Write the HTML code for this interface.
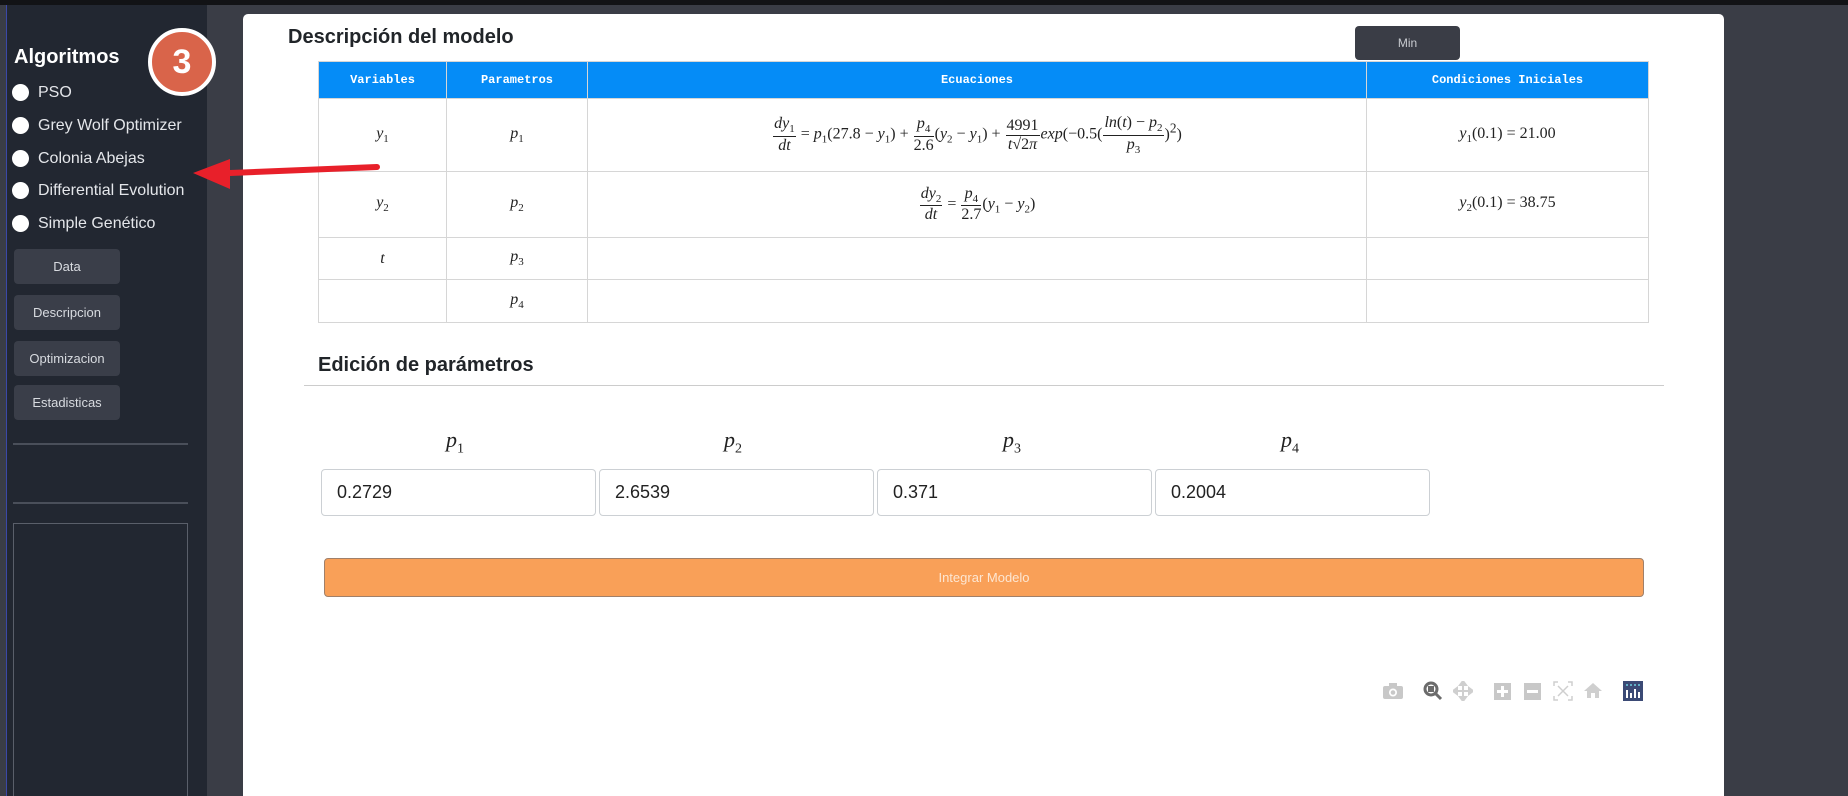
<!DOCTYPE html>
<html><head><meta charset="utf-8"><style>
*{box-sizing:border-box;margin:0;padding:0}
html,body{width:1848px;height:796px;overflow:hidden}
body{background:#3a3d46;font-family:"Liberation Sans",sans-serif;position:relative}
.abs{position:absolute}
.top{left:0;top:0;width:1848px;height:5px;background:#121316}
.side{left:6px;top:5px;width:201px;height:791px;background:#222731;border-left:1px solid #3b48a8;overflow:hidden}
.rad{position:absolute;left:5px;width:17px;height:17px;border-radius:50%;background:#fff}
.rl{position:absolute;left:31px;color:#e4e6ea;font-size:16px;line-height:18px}
.btn{position:absolute;left:7px;width:106px;height:35px;background:#3a3e49;border-radius:4px;color:#d8dbe0;font-size:13px;text-align:center;line-height:35px}
.card{left:243px;top:14px;width:1481px;height:782px;background:#fff;border-radius:5px 5px 0 0;overflow:hidden}
h2{position:absolute;font-size:20px;font-weight:bold;color:#212529}
table{position:absolute;left:75px;top:47px;border-collapse:collapse;width:1331px}
th{background:#058cf7;color:#fff;font-family:"Liberation Mono",monospace;font-size:12px;font-weight:bold;height:37px;border:1px solid #d6d6d6}
td{border:1px solid #d6d6d6;text-align:center;font-family:"Liberation Serif",serif;font-style:italic;font-size:16px;color:#222}
sub{font-size:11px;font-style:normal}
.fr{display:inline-flex;flex-direction:column;vertical-align:middle;text-align:center;margin:0 1px}
.fr>span:first-child{border-bottom:1px solid #222;padding:0 1px}
.n{font-style:normal}
.plab{position:absolute;top:413px;font-family:"Liberation Serif",serif;font-style:italic;font-size:22px;color:#222}
.inp{position:absolute;top:455px;height:47px;width:275px;border:1px solid #ccd0d4;border-radius:4px;font-size:18px;color:#222;padding-left:15px;line-height:45px}
.ic{position:absolute;top:669px}
</style></head><body>
<div class="abs top"></div>
<div class="abs side">
 <div class="abs" style="left:7px;top:41px;color:#fff;font-weight:bold;font-size:20px">Algoritmos</div>
 <div class="rad" style="top:79px"></div><div class="rl" style="top:79px">PSO</div>
 <div class="rad" style="top:112px"></div><div class="rl" style="top:112px">Grey Wolf Optimizer</div>
 <div class="rad" style="top:145px"></div><div class="rl" style="top:145px">Colonia Abejas</div>
 <div class="rad" style="top:177px"></div><div class="rl" style="top:177px">Differential Evolution</div>
 <div class="rad" style="top:210px"></div><div class="rl" style="top:210px">Simple Genético</div>
 <div class="btn" style="top:244px">Data</div>
 <div class="btn" style="top:290px">Descripcion</div>
 <div class="btn" style="top:336px">Optimizacion</div>
 <div class="btn" style="top:380px">Estadisticas</div>
 <div class="abs" style="left:6px;top:438px;width:175px;height:2px;background:#4a4f5a"></div>
 <div class="abs" style="left:6px;top:497px;width:175px;height:2px;background:#4a4f5a"></div>
 <div class="abs" style="left:6px;top:518px;width:175px;height:290px;border:1px solid #5a5f6a"></div>
</div>
<div class="abs card">
 <h2 style="left:45px;top:12px">Descripción del modelo</h2>
 <div class="abs" style="left:1112px;top:12px;width:105px;height:34px;background:#3a3d46;border-radius:4px;color:#c8cbd0;font-size:12px;text-align:center;line-height:34px">Min</div>
 <table>
  <tr><th style="width:128px">Variables</th><th style="width:141px">Parametros</th><th style="width:779px">Ecuaciones</th><th>Condiciones Iniciales</th></tr>
  <tr style="height:73px"><td>y<sub>1</sub></td><td>p<sub>1</sub></td><td><span class="fr"><span>dy<sub>1</sub></span><span>dt</span></span> <span class="n">=</span> p<sub>1</sub><span class="n">(27.8 − </span>y<sub>1</sub><span class="n">) + </span><span class="fr"><span>p<sub>4</sub></span><span class="n">2.6</span></span><span class="n">(</span>y<sub>2</sub><span class="n"> − </span>y<sub>1</sub><span class="n">) + </span><span class="fr"><span class="n">4991</span><span>t<span class="n">√2</span>π</span></span>exp<span class="n">(−0.5(</span><span class="fr"><span>ln<span class="n">(</span>t<span class="n">) − </span>p<sub>2</sub></span><span>p<sub>3</sub></span></span><span class="n">)<sup>2</sup>)</span></td><td>y<sub>1</sub><span class="n">(0.1) = 21.00</span></td></tr>
  <tr style="height:66px"><td>y<sub>2</sub></td><td>p<sub>2</sub></td><td><span class="fr"><span>dy<sub>2</sub></span><span>dt</span></span> <span class="n">=</span> <span class="fr"><span>p<sub>4</sub></span><span class="n">2.7</span></span><span class="n">(</span>y<sub>1</sub><span class="n"> − </span>y<sub>2</sub><span class="n">)</span></td><td>y<sub>2</sub><span class="n">(0.1) = 38.75</span></td></tr>
  <tr style="height:42px"><td>t</td><td>p<sub>3</sub></td><td></td><td></td></tr>
  <tr style="height:43px"><td></td><td>p<sub>4</sub></td><td></td><td></td></tr>
 </table>
 <h2 style="left:75px;top:340px">Edición de parámetros</h2>
 <div class="abs" style="left:61px;top:371px;width:1360px;height:1px;background:#ccc"></div>
 <div class="plab" style="left:203px">p<sub style="font-size:14px">1</sub></div>
 <div class="plab" style="left:481px">p<sub style="font-size:14px">2</sub></div>
 <div class="plab" style="left:760px">p<sub style="font-size:14px">3</sub></div>
 <div class="plab" style="left:1038px">p<sub style="font-size:14px">4</sub></div>
 <div class="inp" style="left:78px">0.2729</div>
 <div class="inp" style="left:356px">2.6539</div>
 <div class="inp" style="left:634px">0.371</div>
 <div class="inp" style="left:912px">0.2004</div>
 <div class="abs" style="left:81px;top:544px;width:1320px;height:39px;background:#f9a058;border:1px solid #a0806a;border-radius:4px;color:#fde6d2;font-size:13px;text-align:center;line-height:37px">Integrar Modelo</div>
 <svg class="ic" style="left:1140px" width="20" height="16"><rect x="0" y="3" width="20" height="13" rx="2" fill="#c8c8c8"/><rect x="6" y="0" width="8" height="4" fill="#c8c8c8"/><circle cx="10" cy="9.5" r="4" fill="#fff"/><circle cx="10" cy="9.5" r="2.3" fill="#c8c8c8"/></svg>
 <svg class="ic" style="left:1180px;top:667px" width="20" height="20"><circle cx="8" cy="8" r="6" fill="none" stroke="#6b6b6b" stroke-width="3"/><rect x="5" y="5" width="6" height="6" fill="#6b6b6b"/><line x1="12" y1="12" x2="18" y2="18" stroke="#6b6b6b" stroke-width="3"/></svg>
 <svg class="ic" style="left:1210px;top:667px" width="20" height="20" stroke="#cfcfcf" stroke-width="2" fill="#cfcfcf"><line x1="10" y1="2" x2="10" y2="18"/><line x1="2" y1="10" x2="18" y2="10"/><polygon points="10,0 7,4 13,4"/><polygon points="10,20 7,16 13,16"/><polygon points="0,10 4,7 4,13"/><polygon points="20,10 16,7 16,13"/></svg>
 <svg class="ic" style="left:1251px" width="17" height="17"><rect width="17" height="17" fill="#c8c8c8"/><path d="M8.5 3v11M3 8.5h11" stroke="#fff" stroke-width="3"/></svg>
 <svg class="ic" style="left:1281px" width="17" height="17"><rect width="17" height="17" fill="#c8c8c8"/><path d="M3 8.5h11" stroke="#fff" stroke-width="3"/></svg>
 <svg class="ic" style="left:1310px;top:667px" width="20" height="20" fill="none" stroke="#cfcfcf" stroke-width="1.5"><path d="M1 5V1h4M15 1h4v4M19 15v4h-4M5 19H1v-4M5 5l10 10M15 5L5 15"/></svg>
 <svg class="ic" style="left:1341px;top:668px" width="18" height="16"><path d="M9 1L0 9h3v7h4v-5h4v5h4V9h3z" fill="#cfcfcf"/></svg>
 <svg class="ic" style="left:1380px;top:667px" width="20" height="20"><rect width="20" height="20" fill="#3b4a75"/><g fill="#fff"><rect x="3" y="9" width="2" height="8"/><rect x="7" y="12" width="2" height="5"/><rect x="11" y="8" width="2" height="9"/><rect x="15" y="11" width="2" height="6"/></g><g fill="#6fd0e0"><circle cx="4" cy="4" r="1"/><circle cx="8" cy="4" r="1"/><circle cx="12" cy="4" r="1"/><circle cx="16" cy="4" r="1"/></g></svg>
</div>
<div class="abs" style="left:148px;top:28px;width:68px;height:68px;border-radius:50%;background:#d9644a;border:4px solid #fff;color:#fff;font-weight:bold;font-size:34px;text-align:center;line-height:60px;z-index:5">3</div>
<svg class="abs" style="left:185px;top:150px;z-index:5" width="200" height="40"><line x1="45" y1="23" x2="192" y2="17" stroke="#e8202a" stroke-width="6" stroke-linecap="round"/><polygon points="8,23 45,9 45,39" fill="#e8202a"/></svg>
</body></html>
